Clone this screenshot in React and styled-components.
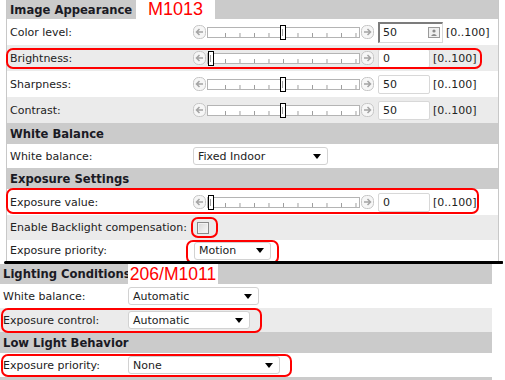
import React from 'react';
import styled, { createGlobalStyle } from 'styled-components';

const Global = createGlobalStyle`
  html, body { margin: 0; padding: 0; background: #fff; }
  body { font-family: "DejaVu Sans", Verdana, sans-serif; font-size: 11px; color: #222; }
`;

const Page = styled.div`
  width: 505px;
  height: 380px;
  overflow: hidden;
  display: flex;
  flex-direction: column;
`;

const TopPanel = styled.div`
  margin-left: 6px;
  width: 491px;
  border-left: 1px solid #c8c8c8;
  border-right: 1px solid #c8c8c8;
  display: flex;
  flex-direction: column;
`;

const BottomPanel = styled.div`
  width: 492px;
  display: flex;
  flex-direction: column;
`;

const Header = styled.div`
  position: relative;
  height: ${p => p.$h}px;
  flex: none;
  background: #cbcbcb;
  display: flex;
  align-items: center;
  padding-left: ${p => p.$pad}px;
  font-weight: bold;
  font-size: 11.6px;
  color: #1a1a24;
`;

const Tag = styled.span`
  position: absolute;
  top: 0;
  bottom: 0;
  left: ${p => p.$x}px;
  width: ${p => p.$w}px;
  background: #fff;
  color: #f00;
  font-family: "Liberation Sans", Arial, sans-serif;
  font-weight: normal;
  font-size: ${p => p.$fs}px;
  display: flex;
  align-items: center;
  justify-content: center;
`;

const Row = styled.div`
  position: relative;
  height: ${p => p.$h}px;
  flex: none;
  background: ${p => (p.$alt ? '#ebebeb' : '#fff')};
  display: grid;
  grid-template-columns: ${p => p.$col}px 1fr;
  align-items: center;
`;

const Label = styled.div`
  padding-left: ${p => p.$pad}px;
  white-space: nowrap;
`;

const Controls = styled.div`
  display: flex;
  align-items: center;
`;

const Outline = styled.div`
  position: absolute;
  z-index: 2;
  left: ${p => p.$x}px;
  top: ${p => p.$y}px;
  width: ${p => p.$w}px;
  height: ${p => p.$h}px;
  box-sizing: border-box;
  border: 2px solid #f00;
  border-radius: 7px;
  pointer-events: none;
`;

const SliderBox = styled.div`
  display: flex;
  align-items: center;
`;

const Track = styled.div`
  position: relative;
  box-sizing: border-box;
  width: 153px;
  height: 11px;
  margin: 0 1px;
  padding-left: 10px;
  border: 1px solid #b4b4b4;
  background:
    linear-gradient(to right, #9c9c9c 0 1px, transparent 1px) 7px 100% / 14.5px 4px repeat-x content-box,
    linear-gradient(#fff, #fff) padding-box;
`;

const Thumb = styled.div`
  position: absolute;
  top: -3px;
  width: 6px;
  height: 15px;
  box-sizing: border-box;
  border: 1px solid #000;
  background: #fff;
  &::after {
    content: '';
    position: absolute;
    left: 1px;
    top: 3px;
    width: 1px;
    height: 7px;
    background: #a0a0a0;
  }
`;

const NumBox = styled.div`
  box-sizing: border-box;
  width: ${p => p.$w}px;
  height: ${p => p.$h}px;
  margin-left: 4px;
  padding: 0 2px 0 4px;
  background: #fff;
  border: 1px solid #d8d8d8;
  border-radius: 2px;
  ${p => p.$focus && 'border-top: 2px solid #7c7c7c; border-left: 2px solid #7c7c7c; border-radius: 0; padding-left: 3px;'}
  display: flex;
  align-items: center;
  justify-content: space-between;
`;

const Range = styled.span`
  margin-left: 3px;
`;

const Select = styled.div`
  box-sizing: border-box;
  width: ${p => p.$w}px;
  height: 18px;
  margin-left: ${p => p.$ml || 0}px;
  padding: 0 6px 0 4px;
  background: #fff;
  border: 1px solid #d2d2d2;
  border-radius: 3px;
  display: flex;
  align-items: center;
  justify-content: space-between;
`;

const Caret = styled.span`
  width: 0;
  height: 0;
  border-left: 4px solid transparent;
  border-right: 4px solid transparent;
  border-top: 5px solid #000;
`;

const Check = styled.div`
  margin-left: 4px;
  width: 12px;
  height: 12px;
  box-sizing: border-box;
  border: 1px solid #8a8a8a;
  background: linear-gradient(135deg, #d6d6d6, #fafafa);
  box-shadow: inset 0 0 0 1px #f2f2f2;
`;

const Divider = styled.div`
  position: relative;
  z-index: 3;
  flex: none;
  margin-left: 4px;
  width: 499px;
  height: 3px;
  background: #000;
  border-radius: 2px 1px 1px 2px;
`;

const Arrow = ({ dir }) => (
  <svg width="13" height="14" viewBox="0 0 13 14">
    <rect x="0.5" y="0.5" width="12" height="13" rx="5" fill="#f6f6f6" stroke="#c6c6c6" />
    <path
      d={dir === 'l' ? 'M10 7H3.5M6.5 4L3.5 7L6.5 10' : 'M3 7H9.5M6.5 4L9.5 7L6.5 10'}
      fill="none"
      stroke="#a4a4a4"
      strokeWidth="1.5"
    />
  </svg>
);

const FieldIcon = () => (
  <svg width="12" height="11" viewBox="0 0 12 11">
    <rect x="0.5" y="0.5" width="11" height="10" fill="#efefef" stroke="#9a9a9a" />
    <circle cx="6" cy="4" r="1.6" fill="#8a8a8a" />
    <path d="M3 9 Q6 5 9 9 Z" fill="#8a8a8a" />
  </svg>
);

const Slider = ({ value }) => (
  <SliderBox>
    <Arrow dir="l" />
    <Track>
      <Thumb style={{ left: `${Math.round(value * 1.44)}px` }} />
    </Track>
    <Arrow dir="r" />
  </SliderBox>
);

const SliderRow = ({ label, value, alt, focus, outline }) => (
  <Row $h={26} $alt={alt} $col={186}>
    <Label $pad={3}>{label}</Label>
    <Controls>
      <Slider value={value} />
      <NumBox $w={focus ? 65 : 52} $h={focus ? 21 : 19} $focus={focus}>
        <span>{value}</span>
        {focus && <FieldIcon />}
      </NumBox>
      <Range>[0..100]</Range>
    </Controls>
    {outline}
  </Row>
);

export default function App() {
  return (
    <Page>
      <Global />
      <TopPanel>
        <Header $h={19} $pad={3}>
          Image Appearance
          <Tag $x={129} $w={79} $fs={18}>M1013</Tag>
        </Header>
        <SliderRow label="Color level:" value={50} focus />
        <SliderRow
          label="Brightness:"
          value={0}
          alt
          outline={<Outline $x={-1} $y={3} $w={476} $h={21} />}
        />
        <SliderRow label="Sharpness:" value={50} />
        <SliderRow label="Contrast:" value={50} alt />
        <Header $h={21} $pad={3}>White Balance</Header>
        <Row $h={24} $col={186}>
          <Label $pad={3}>White balance:</Label>
          <Controls>
            <Select $w={135}>
              <span>Fixed Indoor</span>
              <Caret />
            </Select>
          </Controls>
        </Row>
        <Header $h={21} $pad={3}>Exposure Settings</Header>
        <SliderRow
          label="Exposure value:"
          value={0}
          outline={<Outline $x={-1} $y={-1} $w={473} $h={26} />}
        />
        <Row $h={25} $alt $col={186}>
          <Label $pad={3}>Enable Backlight compensation:</Label>
          <Controls>
            <Check />
          </Controls>
          <Outline $x={184} $y={2} $w={27} $h={21} />
        </Row>
        <Row $h={21} $col={186}>
          <Label $pad={3}>Exposure priority:</Label>
          <Controls>
            <Select $w={77} $ml={1}>
              <span>Motion</span>
              <Caret />
            </Select>
          </Controls>
          <Outline $x={179} $y={0} $w={93} $h={24} />
        </Row>
      </TopPanel>
      <Divider />
      <BottomPanel>
        <Header $h={20} $pad={3}>
          Lighting Conditions
          <Tag $x={128} $w={90} $fs={17.5}>206/M1011</Tag>
        </Header>
        <Row $h={24} $col={128}>
          <Label $pad={3}>White balance:</Label>
          <Controls>
            <Select $w={131}>
              <span>Automatic</span>
              <Caret />
            </Select>
          </Controls>
        </Row>
        <Row $h={24} $alt $col={128}>
          <Label $pad={3}>Exposure control:</Label>
          <Controls>
            <Select $w={122}>
              <span>Automatic</span>
              <Caret />
            </Select>
          </Controls>
          <Outline $x={1} $y={0} $w={261} $h={25} />
        </Row>
        <Header $h={21} $pad={3}>Low Light Behavior</Header>
        <Row $h={24} $col={128}>
          <Label $pad={3}>Exposure priority:</Label>
          <Controls>
            <Select $w={152}>
              <span>None</span>
              <Caret />
            </Select>
          </Controls>
          <Outline $x={1} $y={1} $w={291} $h={23} />
        </Row>
        <Header $h={21} $pad={3} />
      </BottomPanel>
    </Page>
  );
}
